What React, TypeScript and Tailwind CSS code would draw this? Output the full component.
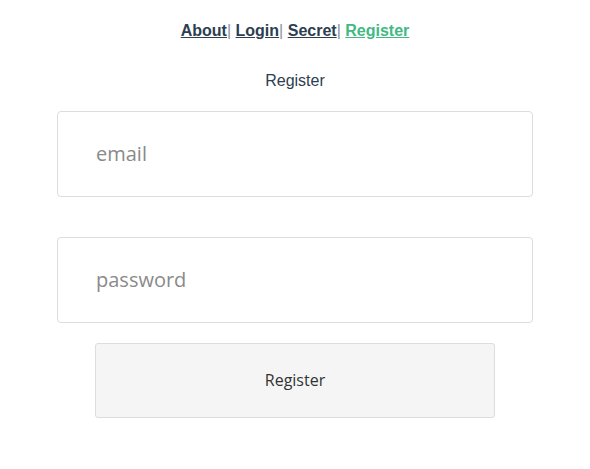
import React from "react";

export default function App() {
  return (
    <div className="w-[590px] h-[469px] bg-white text-center text-[#2c3e50]" style={{ fontFamily: '"Liberation Sans", Arial, sans-serif' }}>
      <nav className="pt-[21px] text-[16px] leading-[19px] font-bold">
        <a href="#" className="underline text-[#2c3e50]">About</a>
        <span className="font-normal text-[#8a949e]">|</span>{" "}
        <a href="#" className="underline text-[#2c3e50]">Login</a>
        <span className="font-normal text-[#8a949e]">|</span>{" "}
        <a href="#" className="underline text-[#2c3e50]">Secret</a>
        <span className="font-normal text-[#8a949e]">|</span>{" "}
        <a href="#" className="underline text-[#42b983]">Register</a>
      </nav>
      <div className="mt-[31px] text-[16px] leading-[19px]">Register</div>
      <div className="flex flex-col items-center mt-[21px]" style={{ fontFamily: '"Open Sans", "Noto Sans", sans-serif' }}>
        <input
          placeholder="email"
          className="w-[476px] h-[86px] border border-[#dddddd] rounded-[4px] pl-[38px] pb-[2px] text-[20px] placeholder:text-[#8a8a8a] outline-none"
        />
        <input
          placeholder="password"
          type="password"
          className="mt-[40px] w-[476px] h-[86px] border border-[#dddddd] rounded-[4px] pl-[38px] pb-[2px] text-[20px] placeholder:text-[#8a8a8a] outline-none"
        />
        <button className="mt-[20px] w-[400px] h-[75px] bg-[#f5f5f5] border border-[#dddddd] rounded-[3px] pb-[1px] text-[16px] text-[#333333]">
          Register
        </button>
      </div>
    </div>
  );
}
